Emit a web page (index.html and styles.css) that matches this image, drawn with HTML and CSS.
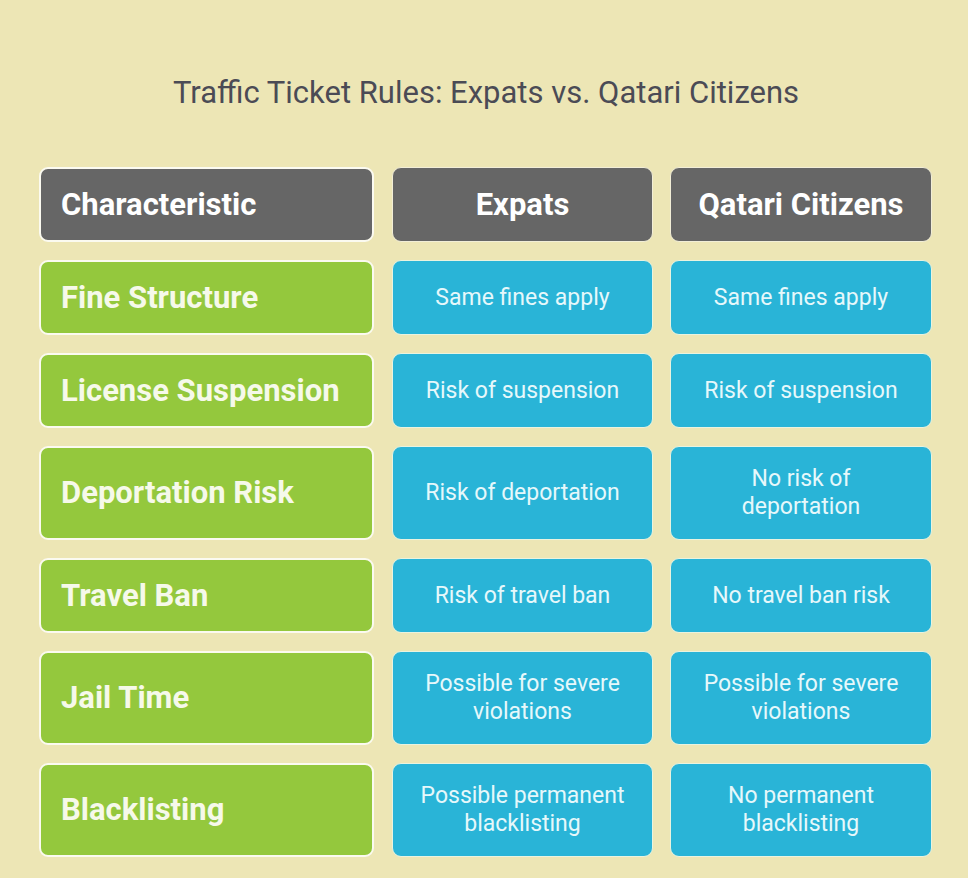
FILE: index.html
```html
<!DOCTYPE html>
<html>
<head>
<meta charset="utf-8">
<link rel="stylesheet" href="styles.css">
</head>
<body>
<div class="page">
  <h1 class="title">Traffic Ticket Rules: Expats vs. Qatari Citizens</h1>
  <div class="table">
    <div class="cell head first">Characteristic</div>
    <div class="cell head">Expats</div>
    <div class="cell head">Qatari Citizens</div>

    <div class="cell label">Fine Structure</div>
    <div class="cell val">Same fines apply</div>
    <div class="cell val">Same fines apply</div>

    <div class="cell label">License Suspension</div>
    <div class="cell val">Risk of suspension</div>
    <div class="cell val">Risk of suspension</div>

    <div class="cell label">Deportation Risk</div>
    <div class="cell val">Risk of deportation</div>
    <div class="cell val">No risk of<br>deportation</div>

    <div class="cell label">Travel Ban</div>
    <div class="cell val">Risk of travel ban</div>
    <div class="cell val">No travel ban risk</div>

    <div class="cell label">Jail Time</div>
    <div class="cell val">Possible for severe<br>violations</div>
    <div class="cell val">Possible for severe<br>violations</div>

    <div class="cell label">Blacklisting</div>
    <div class="cell val">Possible permanent<br>blacklisting</div>
    <div class="cell val">No permanent<br>blacklisting</div>
  </div>
</div>
</body>
</html>
```

FILE: styles.css
```css
html, body {
  margin: 0;
  padding: 0;
  background: #ede6b5;
}
body {
  font-family: Roboto, "Liberation Sans", sans-serif;
}
.page {
  width: 894px;
  margin-left: 39px;
  padding-top: 75px;
}
.title {
  margin: 0 0 56px 0;
  font-size: 31px;
  line-height: 36px;
  font-weight: 400;
  color: #4b4b55;
  text-align: center;
}
.table {
  display: grid;
  grid-template-columns: 335px 262px 262px;
  column-gap: 17px;
  row-gap: 18px;
}
.table > .cell:nth-child(3n+2) {
  margin-left: 1px;
}
.cell {
  box-sizing: border-box;
  min-height: 75px;
  padding: 18px 10px;
  border-radius: 9px;
  display: flex;
  align-items: center;
  justify-content: center;
  text-align: center;
}
.head {
  background: #666666;
  color: #ffffff;
  font-weight: 700;
  font-size: 31px;
  line-height: 36px;
  padding-top: 8px;
  padding-bottom: 8px;
  border: 1px solid #f2eed7;
}
.head.first {
  justify-content: flex-start;
  padding-left: 20px;
  border: 2px solid #fbfaf0;
}
.label {
  background: #94c83d;
  color: #f6f9ea;
  font-weight: 700;
  font-size: 31px;
  line-height: 36px;
  padding-top: 8px;
  padding-bottom: 8px;
  justify-content: flex-start;
  text-align: left;
  padding-left: 20px;
  border: 2px solid #fbfaf0;
}
.val {
  background: #29b4d7;
  color: #e6f8fb;
  font-size: 23px;
  line-height: 28px;
  border: 1px solid #e9f3df;
}
```
